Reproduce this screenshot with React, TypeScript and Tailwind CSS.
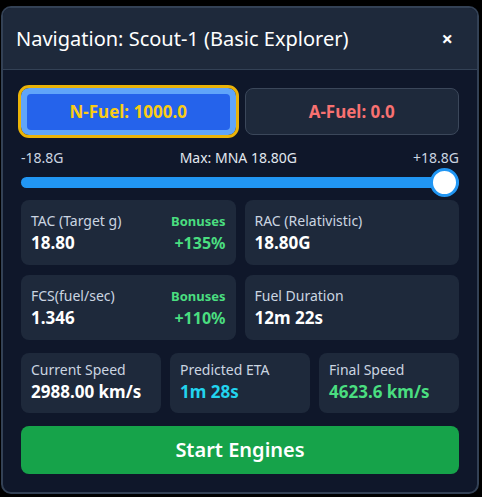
import React from "react";

const font = { fontFamily: '"Noto Sans", "Open Sans", sans-serif' };

function StatCard({
  label,
  value,
  bonus,
}: {
  label: string;
  value: string;
  bonus?: string;
}) {
  return (
    <div className="flex h-[65px] items-center justify-between rounded-lg bg-[#1e293b] px-[10px]">
      <div className="flex flex-col">
        <span className="text-[14px] leading-[20px] text-[#cbd5e1]">{label}</span>
        <span className="text-[17px] font-bold leading-[24px] text-white">{value}</span>
      </div>
      {bonus && (
        <div className="flex flex-col items-end">
          <span className="text-[13px] font-bold leading-[20px] text-[#4ade80]">Bonuses</span>
          <span className="text-[16px] font-bold leading-[24px] text-[#4ade80]">{bonus}</span>
        </div>
      )}
    </div>
  );
}

function SpeedCard({
  label,
  value,
  color,
}: {
  label: string;
  value: string;
  color: string;
}) {
  return (
    <div className="flex h-[60px] flex-col justify-center rounded-lg bg-[#1e293b] px-[10px] pb-[2px]">
      <span className="text-[14px] leading-[20px] text-[#cbd5e1]">{label}</span>
      <span className={`text-[17px] font-bold leading-[24px] ${color}`}>{value}</span>
    </div>
  );
}

export default function App() {
  return (
    <div className="h-[497px] w-[482px] bg-black pl-[1px] pt-[6px]" style={font}>
      <div className="w-[478px] overflow-hidden rounded-[10px] border-2 border-[#334155] bg-[#0f172a]">
        <div className="flex h-[62px] items-center justify-between border-b border-[#334155] bg-[#1e293b] pl-[13px] pr-[24px]">
          <h2 className="text-[20px] leading-[28px] text-white">
            Navigation: Scout-1 (Basic Explorer)
          </h2>
          <button className="text-[20px] font-bold leading-none text-white">×</button>
        </div>

        <div className="flex flex-col px-[18px] pb-[18px] pt-[18px]">
          <div className="grid grid-cols-2 gap-[9px]">
            <button className="h-[47px] rounded-lg bg-[#60a5fa] px-[6px] pb-[5px] pt-[6px] outline outline-[3px] outline-[#eab308]">
              <div className="flex h-full items-center justify-center rounded-[4px] bg-[#2563eb] text-[17px] font-bold text-[#facc15]">
                N-Fuel: 1000.0
              </div>
            </button>
            <button className="flex h-[47px] items-center justify-center rounded-lg border border-[#3b475a] bg-[#1e293b] text-[17px] font-bold text-[#f87171]">
              A-Fuel: 0.0
            </button>
          </div>

          <div className="mt-[13px] flex items-center justify-between text-[14px] leading-[20px]">
            <span className="text-[#cbd5e1]">-18.8G</span>
            <span className="text-[#e2e8f0]">Max: MNA 18.80G</span>
            <span className="text-[#cbd5e1]">+18.8G</span>
          </div>
          <div className="relative flex h-[29px] items-center">
            <div className="h-[11px] w-full rounded-full bg-[#2196f3]" />
            <div className="absolute right-0 top-0 h-[29px] w-[29px] rounded-full border-[3px] border-[#2196f3] bg-white" />
          </div>

          <div className="mt-[3px] grid grid-cols-2 gap-x-[9px] gap-y-[10px]">
            <StatCard label="TAC (Target g)" value="18.80" bonus="+135%" />
            <StatCard label="RAC (Relativistic)" value="18.80G" />
            <StatCard label="FCS(fuel/sec)" value="1.346" bonus="+110%" />
            <StatCard label="Fuel Duration" value="12m 22s" />
          </div>

          <div className="mt-[13px] grid grid-cols-3 gap-[9px]">
            <SpeedCard label="Current Speed" value="2988.00 km/s" color="text-white" />
            <SpeedCard label="Predicted ETA" value="1m 28s" color="text-[#22d3ee]" />
            <SpeedCard label="Final Speed" value="4623.6 km/s" color="text-[#4ade80]" />
          </div>

          <button className="mt-[13px] flex h-[48px] items-center justify-center rounded-lg bg-[#16a34a] text-[20px] font-semibold text-white">
            Start Engines
          </button>
        </div>
      </div>
    </div>
  );
}
